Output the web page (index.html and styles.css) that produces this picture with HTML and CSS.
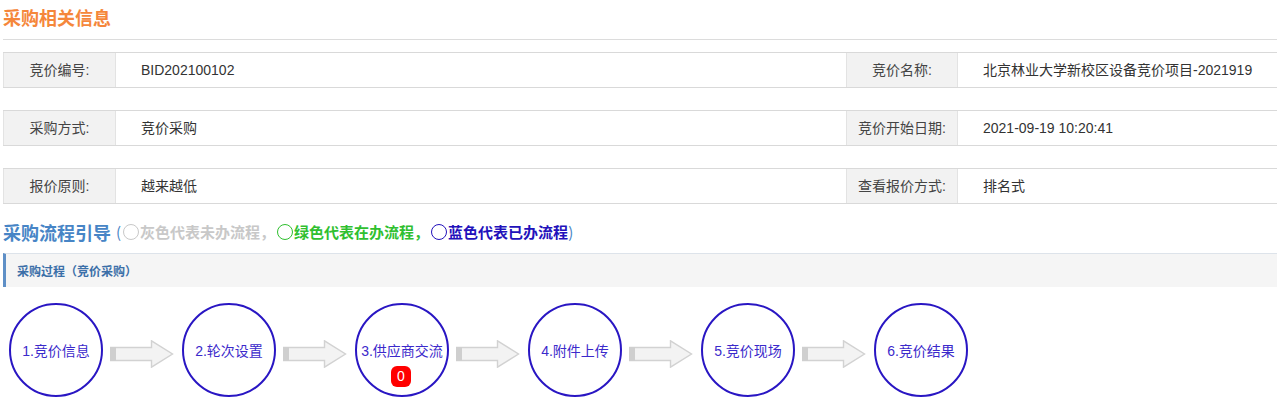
FILE: index.html
```html
<!DOCTYPE html>
<html lang="zh-CN">
<head>
<meta charset="utf-8">
<title>采购相关信息</title>
<link rel="stylesheet" href="styles.css">
</head>
<body>
<div class="page">
  <h2 class="sec-title">采购相关信息</h2>
  <div class="rule"></div>

  <div class="info-row">
    <div class="lbl">竞价编号:</div>
    <div class="val">BID202100102</div>
    <div class="lbl">竞价名称:</div>
    <div class="val">北京林业大学新校区设备竞价项目-2021919</div>
  </div>
  <div class="info-row">
    <div class="lbl">采购方式:</div>
    <div class="val">竞价采购</div>
    <div class="lbl">竞价开始日期:</div>
    <div class="val">2021-09-19 10:20:41</div>
  </div>
  <div class="info-row info-row-last">
    <div class="lbl">报价原则:</div>
    <div class="val">越来越低</div>
    <div class="lbl">查看报价方式:</div>
    <div class="val">排名式</div>
  </div>

  <div class="guide">
    <span class="guide-title">采购流程引导</span>
    <span class="legend"><span class="paren">(</span><span class="dot dot-gray"></span><span class="t-gray">灰色代表未办流程，</span><span class="dot dot-green"></span><span class="t-green">绿色代表在办流程，</span><span class="dot dot-blue"></span><span class="t-blue">蓝色代表已办流程</span><span class="paren">)</span></span>
  </div>

  <div class="bar">采购过程（竞价采购）</div>

  <div class="flow">
    <div class="step">1.竞价信息</div>
    <svg class="arrow" width="64" height="28" viewBox="0 0 64 28"><polygon points="0.5,7.5 41.5,7.5 41.5,0.8 62.5,14 41.5,27.2 41.5,20.5 0.5,20.5" fill="#f3f3f3" stroke="#d2d2d2" stroke-width="1.4"/><rect x="0" y="7" width="6" height="14" fill="#cfcfcf"/></svg>
    <div class="step">2.轮次设置</div>
    <svg class="arrow" width="64" height="28" viewBox="0 0 64 28"><polygon points="0.5,7.5 41.5,7.5 41.5,0.8 62.5,14 41.5,27.2 41.5,20.5 0.5,20.5" fill="#f3f3f3" stroke="#d2d2d2" stroke-width="1.4"/><rect x="0" y="7" width="6" height="14" fill="#cfcfcf"/></svg>
    <div class="step">3.供应商交流<span class="badge">0</span></div>
    <svg class="arrow" width="64" height="28" viewBox="0 0 64 28"><polygon points="0.5,7.5 41.5,7.5 41.5,0.8 62.5,14 41.5,27.2 41.5,20.5 0.5,20.5" fill="#f3f3f3" stroke="#d2d2d2" stroke-width="1.4"/><rect x="0" y="7" width="6" height="14" fill="#cfcfcf"/></svg>
    <div class="step">4.附件上传</div>
    <svg class="arrow" width="64" height="28" viewBox="0 0 64 28"><polygon points="0.5,7.5 41.5,7.5 41.5,0.8 62.5,14 41.5,27.2 41.5,20.5 0.5,20.5" fill="#f3f3f3" stroke="#d2d2d2" stroke-width="1.4"/><rect x="0" y="7" width="6" height="14" fill="#cfcfcf"/></svg>
    <div class="step">5.竞价现场</div>
    <svg class="arrow" width="64" height="28" viewBox="0 0 64 28"><polygon points="0.5,7.5 41.5,7.5 41.5,0.8 62.5,14 41.5,27.2 41.5,20.5 0.5,20.5" fill="#f3f3f3" stroke="#d2d2d2" stroke-width="1.4"/><rect x="0" y="7" width="6" height="14" fill="#cfcfcf"/></svg>
    <div class="step">6.竞价结果</div>
  </div>
</div>
</body>
</html>
```

FILE: styles.css
```css
* { box-sizing: border-box; }
html, body { margin: 0; padding: 0; background: #fff; }
body {
  font-family: "Liberation Sans", "Noto Sans CJK SC", sans-serif;
  font-size: 14px;
  color: #333;
  overflow: hidden;
}
.page {
  width: 1290px;
  padding-left: 3px;
}
.sec-title {
  margin: 0;
  height: 34px;
  line-height: 34px;
  font-size: 18px;
  font-weight: bold;
  color: #f5873b;
  font-family: "Noto Sans CJK SC", sans-serif;
}
.rule {
  height: 1px;
  background: #dcdcdc;
  margin-top: 5px;
  margin-bottom: 12px;
}
.info-row {
  display: grid;
  grid-template-columns: 113px 730px 112px 1fr;
  height: 36px;
  border-top: 1px solid #d9d9d9;
  border-bottom: 1px solid #d9d9d9;
  margin-bottom: 22px;
}
.info-row-last { margin-bottom: 0; }
.lbl {
  background: #f2f2f2;
  text-align: center;
  line-height: 34px;
  color: #444;
  border-left: 1px solid #e3e3e3;
  border-right: 1px solid #e3e3e3;
}
.val {
  line-height: 34px;
  padding-left: 25px;
  color: #333;
  white-space: nowrap;
}
.guide {
  height: 49px;
  display: flex;
  align-items: center;
  padding-top: 6px;
  font-family: "Noto Sans CJK SC", sans-serif;
}
.guide-title {
  font-size: 18px;
  font-weight: bold;
  color: #4785c6;
  margin-right: 5px;
}
.legend {
  display: inline-flex;
  align-items: center;
  font-size: 15px;
  font-weight: bold;
}
.paren { color: #4785c6; font-weight: normal; }
.dot {
  display: inline-block;
  width: 16px;
  height: 16px;
  border-radius: 50%;
  border: 1px solid;
  margin: 0 1px 0 2px;
}
.dot-gray { border-color: #c8c8c8; }
.dot-green { border-color: #2fc02f; }
.dot-blue { border-color: #2211bb; }
.t-gray { color: #c8c8c8; }
.t-green { color: #30bf30; }
.t-blue { color: #2211bb; }
.bar {
  height: 34px;
  line-height: 33px;
  background: #f5f5f5;
  border-top: 1px solid #dde3ea;
  border-left: 3px solid #5e8fc6;
  padding-left: 11px;
  font-size: 12px;
  font-weight: bold;
  color: #3b6fa8;
  font-family: "Noto Sans CJK SC", sans-serif;
}
.flow {
  display: flex;
  align-items: center;
  padding-top: 16px;
  padding-left: 6px;
}
.step {
  position: relative;
  width: 94px;
  height: 94px;
  border: 2px solid #2916c3;
  border-radius: 50%;
  display: flex;
  align-items: center;
  justify-content: center;
  font-size: 14px;
  color: #3b2acb;
  white-space: nowrap;
  font-family: "Liberation Sans", "Noto Sans CJK SC", sans-serif;
  flex: none;
}
.arrow {
  flex: none;
  margin: 8px 8px 0 7px;
}
.badge {
  position: absolute;
  left: 34px;
  top: 61px;
  width: 20px;
  height: 21px;
  border-radius: 6px;
  background: #f00;
  color: #fff;
  font-size: 14px;
  line-height: 21px;
  text-align: center;
}
```
